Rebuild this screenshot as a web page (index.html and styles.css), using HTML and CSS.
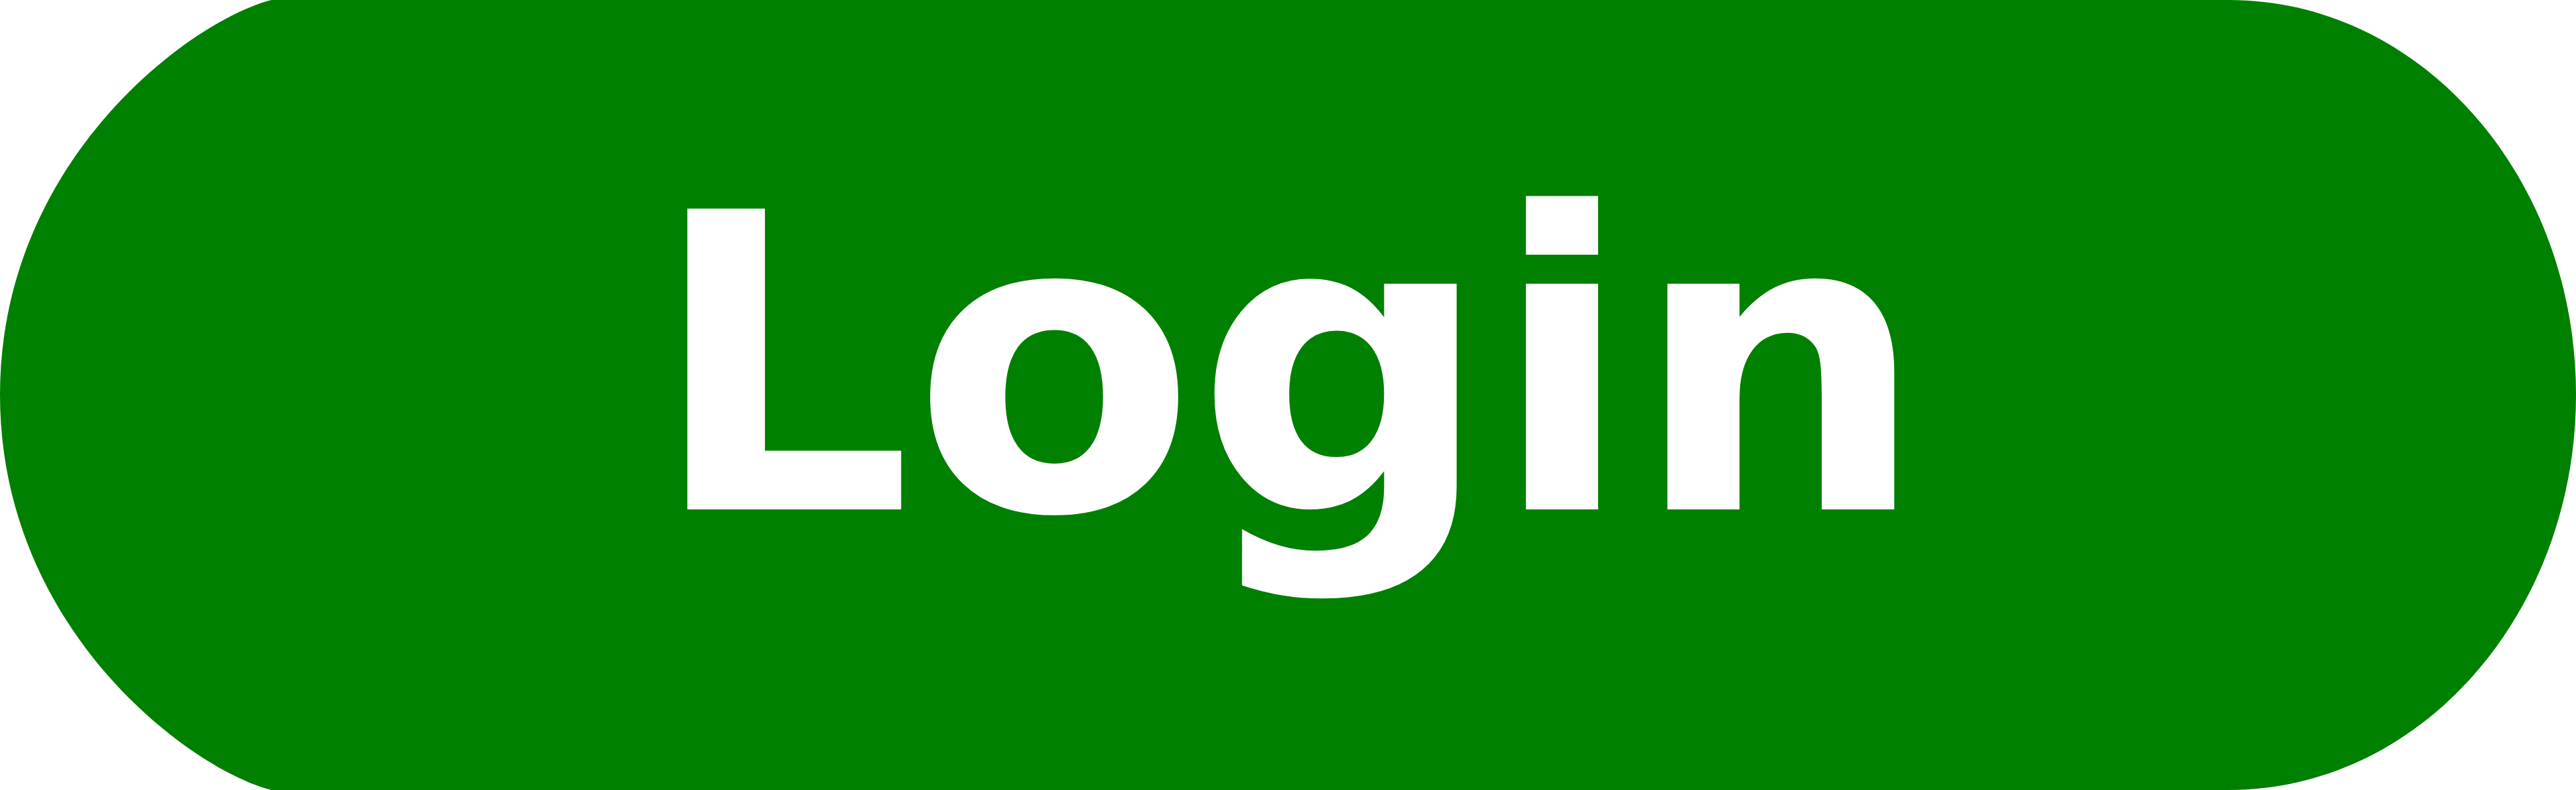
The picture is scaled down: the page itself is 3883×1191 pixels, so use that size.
FILE: index.html
```html
<!DOCTYPE html>
<html lang="en">
<head>
<meta charset="utf-8">
<title>Login</title>
<link rel="stylesheet" href="styles.css">
</head>
<body>
<div class="button">
  <span class="label">Login</span>
</div>
</body>
</html>
```

FILE: styles.css
```css
html, body {
  margin: 0;
  padding: 0;
  background: #ffffff;
}

.button {
  width: 3883px;
  height: 1191px;
  box-sizing: border-box;
  padding-bottom: 86px;
  background: #008000;
  display: flex;
  align-items: center;
  justify-content: center;
  clip-path: path('M409 0 L3360 0 C3649 0 3883 266 3883 595 C3883 924 3649 1191 3360 1191 L409 1191 C290 1161 0 951 0 595 C0 240 290 30 409 0 Z');
}

.label {
  font-family: "DejaVu Sans", "Liberation Sans", sans-serif;
  font-weight: bold;
  font-size: 622px;
  color: #ffffff;
  line-height: normal;
}
```
